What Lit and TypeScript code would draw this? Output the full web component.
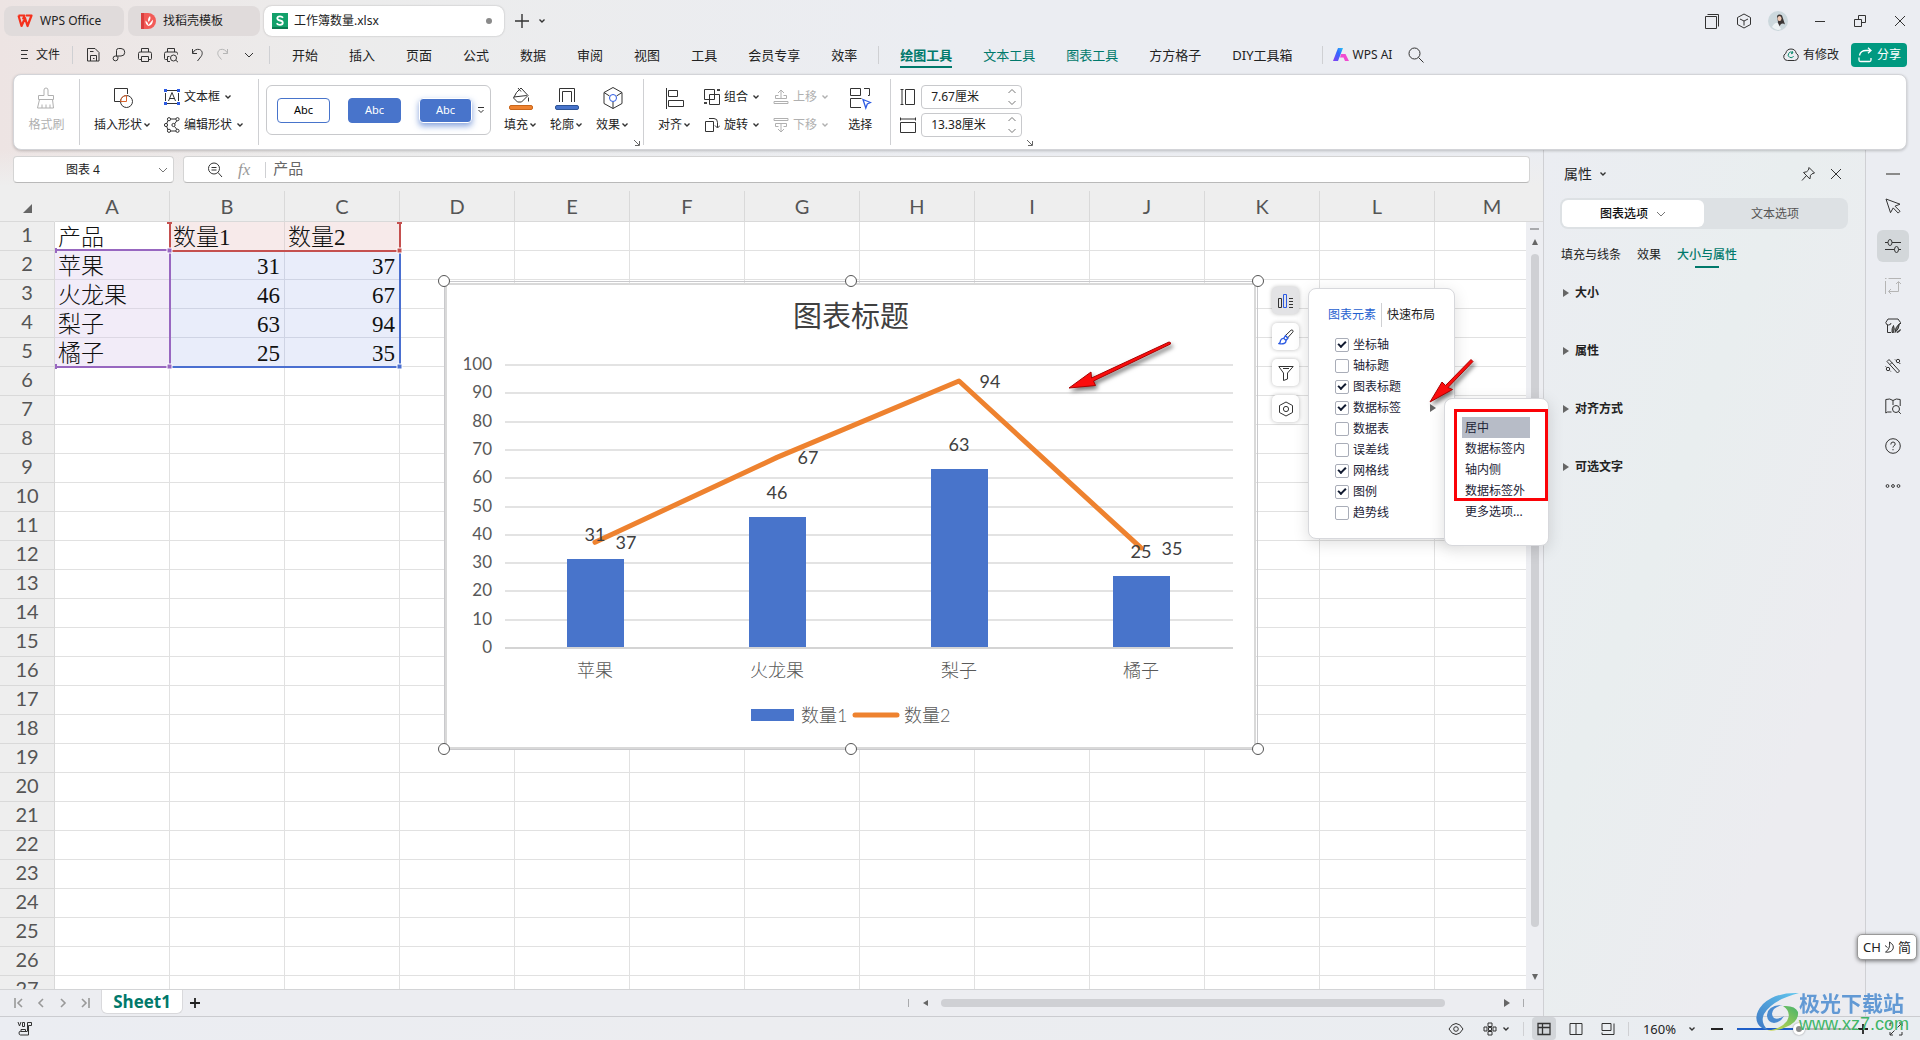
import { LitElement, html, svg, css, TemplateResult, SVGTemplateResult } from "lit";
import { customElement } from "lit/decorators.js";
import { classMap } from "lit/directives/class-map.js";

const ico = (w: number, h: number, body: SVGTemplateResult): TemplateResult =>
  html`<svg class="ico" width=${w} height=${h} viewBox="0 0 ${w} ${h}" aria-hidden="true">${body}</svg>`;

const chev = () => ico(8, 8, svg`<path d="M1.5 2.5 4 5l2.5-2.5" stroke-width="1.4"/>`);
const chevThin = () => ico(10, 8, svg`<path d="M1 2l4 4 4-4"/>`);

const I: Record<string, () => TemplateResult> = {
  menu: () => ico(9, 16, svg`<path d="M1 3.5h7M1 7.5h6M1 11.5h7"/>`),
  save: () => ico(16, 16, svg`<path d="M2.5 1.5h7.5l4 4v8.5h-11.5zM5.5 14v-5.5h6v5.5M5 4.5h3.5M8 11.5h1.5"/>`),
  link: () => ico(16, 16, svg`<path d="M5.5 9.5V3.5q0-2 2-2h2.5a3.3 3.3 0 0 1 0 7.5H4.5a2.4 2.4 0 1 0 2.4 2.4V9.2"/>`),
  print: () => ico(16, 16, svg`<path d="M4.5 5V1.5h7V5M4 12.5H2.5a1 1 0 0 1-1-1v-5a1.5 1.5 0 0 1 1.5-1.5h10a1.5 1.5 0 0 1 1.5 1.5v5a1 1 0 0 1-1 1H12M4.5 9.5h7v5h-7z"/>`),
  preview: () => ico(16, 16, svg`<path d="M4.5 5V1.5h7V5M4 12.5H2.5a1 1 0 0 1-1-1v-5a1.5 1.5 0 0 1 1.5-1.5h10a1.5 1.5 0 0 1 1.5 1.5v1M4.5 14.5v-5h2M4.5 14.5H7"/><circle cx="10.5" cy="11" r="3"/><path d="M12.8 13.2l2.2 2"/>`),
  undo: () => ico(16, 16, svg`<path d="M3.5 2v4.5H8M3.5 6.2C5 3 8 1.8 10.5 2.5c3.3 1.1 3.3 4.8 1.5 7L8.5 14"/>`),
  redo: () => ico(16, 16, svg`<path d="M12.5 2v4.5H8M12.5 6.2C11 3 8 1.8 5.5 2.5c-3.3 1.1-3.3 4.8-1.5 7L6.5 12.5"/>`),
  brush: () => ico(24, 24, svg`<path d="M10 9.5V4a2 2 0 0 1 4 0v5.5h5.5v4h-15v-4zM5.5 13.5l-2 8.5h16l-1-8.5M8 22v-3.5M12 22v-3.5M16 22v-3.5"/>`),
  shapes: () => ico(24, 24, svg`<path d="M12 15.5H3.5v-13h13V8"/><circle cx="15.5" cy="15.5" r="6"/><path d="M9.5 15.5a6 6 0 0 1 6-6v6z" stroke="#d9622b"/>`),
  textbox: () => ico(16, 16, svg`<path d="M3 1.5h10M3 14.5h10M1.5 4v8M14.5 4v8M4.5 12 8 3.5 11.5 12M5.8 9.5h4.5"/><path d="M0 0h3v3H0zM13 0h3v3h-3zM0 13h3v3H0zM13 13h3v3h-3z" fill="#2d5be3" stroke="none"/>`),
  editshape: () => ico(16, 16, svg`<path d="M4 3.5 2.5 7M2.5 9 4 13M6.5 2h5.5M13 3.5 10.5 7M10.5 9.5l2.5 3M6.5 14h5.5"/><circle cx="5" cy="2.2" r="1.6"/><circle cx="13.5" cy="2.2" r="1.6"/><circle cx="2" cy="8" r="1.6"/><circle cx="9.5" cy="8" r="1.6"/><circle cx="5" cy="13.8" r="1.6"/><circle cx="13.5" cy="13.8" r="1.6"/>`),
  fill: () => ico(24, 24, svg`<path d="M7.5 6.5 12 2l7 7.5-6.5 6.5h-4L4.5 12zM9 2l3 3.5M4.8 11l13-1.5M19.5 11.5v4"/><rect x=".5" y="19.5" width="23" height="4" rx="1.5" fill="#ee822f" stroke="#c9661b"/>`),
  outline: () => ico(24, 24, svg`<path d="M4.5 16V2.5h15V16M7.5 16V5.5h9V16"/><rect x=".5" y="19.5" width="23" height="4" rx="1.5" fill="#4874cb" stroke="#2f5597"/>`),
  effect: () => ico(24, 24, svg`<path d="M12 1.5 21 6.5v11L12 22.5 3 17.5v-11zM3 6.5l5.5 3.5M21 6.5 15.5 10M12 22.5V16"/><circle cx="12" cy="12" r="3.5" stroke="#2d5be3"/>`),
  align: () => ico(24, 24, svg`<path d="M3.5 2v21M5.5 4.5h9v6h-9zM5.5 14.5h15v6h-15z"/>`),
  group: () => ico(16, 16, svg`<path d="M.5.5h10v10H.5zM5.5 5.5h10v10h-10z"/><path d="M13 0h3v2h-3zM0 13h3v2H0z" fill="#444" stroke="none"/>`),
  rotate: () => ico(16, 16, svg`<path d="M1.5 4.5h8v10h-8zM5 1.5h5q3.5 0 3.5 4v5M11 8.5l2.5 2.5L16 8.5"/>`),
  up: () => ico(16, 16, svg`<path d="M8 10V1M5 4l3-3 3 3M5.5 6.5h-3v3h11v-3h-3M1 12.5h14v2H1z"/>`),
  down: () => ico(16, 16, svg`<path d="M8 6v9M5 12l3 3 3-3M5.5 9.5h-3v-3h11v3h-3M1 1.5h14v2H1z"/>`),
  select: () => ico(24, 24, svg`<path d="M2.5 9.5v-7h10v7zM16 2.5h5.5v7H20M2.5 12.5v9H13M2.5 12.5h11"/><path d="M15 13.5l7.5 3-3.2 1.5-1.5 4z" stroke="#2d5be3" stroke-width="1.3"/>`),
  hgt: () => ico(16, 16, svg`<path d="M5.5.5h9v15h-9zM.5.5h3M2 .5v15M.5 15.5h3"/>`),
  wid: () => ico(16, 16, svg`<path d="M.5 5.5h15v10H.5zM.5.5v3M.5 2h15M15.5.5v3"/>`),
  corner: () => ico(8, 8, svg`<path d="M1 1l5 5M6.5 2v4.5H2" stroke="#666"/>`),
  zoomfx: () => ico(16, 16, svg`<circle cx="7" cy="6.5" r="5.5"/><path d="M11 10.5l4 4.5M4.5 5.5h5M4.5 8h5"/>`),
  search: () => ico(16, 16, svg`<circle cx="6.5" cy="6.5" r="5.5"/><path d="M10.5 10.5l5 5"/>`),
  windows: () => ico(16, 16, svg`<path d="M1.5 3.5h11v12h-11zM3.5 1.5h11v12"/>`),
  cube: () => ico(16, 16, svg`<path d="M8 1l6.5 3.5v7L8 15 1.5 11.5v-7zM4 6 8 8l4-2M8 8v4.5"/>`),
  min: () => ico(16, 16, svg`<path d="M3 8.5h10"/>`),
  restore: () => ico(16, 16, svg`<path d="M2.5 6.5h7v7h-7zM6.5 6V2.5h7v7H10"/>`),
  close: () => ico(16, 16, svg`<path d="M3 3l10 10M13 3 3 13"/>`),
  cloud: () => ico(16, 16, svg`<path d="M4.5 13.5a3.8 3.8 0 0 1-1.7-7.2 5.3 5.3 0 0 1 10.4 0 3.8 3.8 0 0 1-1.7 7.2z"/><path d="M9.5 5.5A2.8 2.8 0 1 0 10.6 9M9 4l1 2-2 .8" stroke="#0a8a6d"/>`),
  share: () => ico(16, 16, svg`<path d="M2 10.5v2.5q0 1.5 1.5 1.5h9q1.5 0 1.5-1.5v-2M2.5 8.5Q3.5 3.5 9 3.5h5M11 .8l3 2.7-3 2.7" stroke="#fff" stroke-width="1.3"/>`),
  pin: () => ico(16, 16, svg`<path d="M9 1.5l5.5 5.5-2.5.8-1.5 1.5-.6 3.7L3.5 6.5l3.2-.8L8.5 4zM6.5 9.5 2 14.5"/>`),
  x: () => ico(12, 12, svg`<path d="M1 1l10 10M11 1 1 11"/>`),
  cursor: () => ico(16, 16, svg`<path d="M1 1l14 5.2-5 2 5 5-1.8 1.9-5-5.2-2.7 4.8z"/>`),
  sliders: () => ico(16, 16, svg`<path d="M0 4.5h3M7 4.5h9M0 11.5h9.5M13.5 11.5H16"/><ellipse cx="5" cy="4.5" rx="2" ry="3"/><ellipse cx="11.5" cy="11.5" rx="2" ry="3"/>`),
  swap: () => ico(16, 16, svg`<path d="M0 .5h1.5M3.5.5H16M.5 3V16M13.5 4v9.5H4M11 6l2.5-2.5L16 6M6 11l-2.5 2.5L6 16"/>`),
  style: () => ico(16, 16, svg`<path d="M3 1h10l2.5 3.5v1.5M3 1 .8 4.5q.2 2.5 2.7 2.5T6 5M2.5 7v7.5H6"/><path d="M7 14.5q-.5-4 1.5-7 1.5 3.5 0 7zM10 14.5q0-5 4.5-9-.5 6-4.5 9zM12 14.5q2-2.5 3.5-2.8-.8 2.3-3.5 2.8z" fill="#777"/>`),
  magic: () => ico(16, 16, svg`<path d="M2 3.5 4 1.5 14.5 13l-2 2zM5 6.5l2-2"/><circle cx="13" cy="3" r="1.7"/><circle cx="3" cy="11" r="1.7"/><path d="M10 1.5l1 1M15.2 6l-.7-1M.5 8.5l1 .8M5.8 13.5l-1-1"/>`),
  book: () => ico(16, 16, svg`<path d="M6.5 14H2.5L.8 15V1.5Q5 0 8 2.5q3-2.5 7.2-1V8M8 2.5V7"/><circle cx="11" cy="11" r="3.5"/><path d="M13.5 13.5l2.3 2.3"/>`),
  help: () => ico(16, 16, svg`<circle cx="8" cy="8" r="7.3"/><path d="M5.8 6.5q0-2.5 2.2-2.5t2.2 2q0 1.2-1.2 1.8-1 .6-1 1.7M8 11v1.3"/>`),
  dots: () => ico(16, 6, svg`<circle cx="2.5" cy="3" r="1.4"/><circle cx="8" cy="3" r="1.4"/><circle cx="13.5" cy="3" r="1.4"/>`),
  dash: () => ico(16, 4, svg`<path d="M1 2h14" stroke="#8a8a8a" stroke-width="2"/>`),
  elements: () => ico(16, 16, svg`<path d="M.5 5.5h3v9h-3z"/><path d="M5.5 1.5h3v13h-3z" stroke="#2d5be3"/><path d="M11 5.5h4M11 8.5h4M11 11.5h4M11 14.5h4"/>`),
  paint: () => ico(16, 16, svg`<path d="M7.5 6.5 13 1.2q1-.6 1.8.2.7.8 0 1.7L9.5 9z"/><path d="M1 14.5q1.5-1 1.5-3 1-2.5 3.5-2l2 2q.2 2.5-2 3-2.5.7-5 0zM6 9l1.5-2.5L10 9l-2 2.5" stroke="#2d5be3" stroke-width="1.3"/>`),
  funnel: () => ico(16, 16, svg`<path d="M.8 1.5h14.4L9.5 8v6l-4 1.5V8zM5 3.5h6"/>`),
  hex: () => ico(16, 16, svg`<path d="M8 1l6.5 3.5v7L8 15 1.5 11.5v-7z"/><circle cx="8" cy="8" r="2.6"/>`),
  first: () => ico(12, 12, svg`<path d="M2 1v10M9 2 5 6l4 4" stroke-width="1.6"/>`),
  prev: () => ico(12, 12, svg`<path d="M8 2 4 6l4 4" stroke-width="1.6"/>`),
  next: () => ico(12, 12, svg`<path d="M4 2l4 4-4 4" stroke-width="1.6"/>`),
  last: () => ico(12, 12, svg`<path d="M10 1v10M3 2l4 4-4 4" stroke-width="1.6"/>`),
  plus: () => ico(12, 12, svg`<path d="M6 1v10M1 6h10" stroke="#222" stroke-width="1.8"/>`),
  minus: () => ico(12, 12, svg`<path d="M0 6h12" stroke="#222" stroke-width="2"/>`),
  macro: () => ico(16, 16, svg`<path d="M1 1l1.5 4L4 1M5.5 1.5h2v4h-2zM10.5 10V1.5h4v3h-3v9.5h-8q-1.500 0-1.500-2t1.500-1.500h7M4 10.500V8.500h4.500v2"/>`),
  eye: () => ico(16, 16, svg`<path d="M1 8q3-5.5 7-5.5T15 8q-3 5.5-7 5.5T1 8z"/><circle cx="8" cy="8" r="2.3"/>`),
  cross: () => ico(14, 14, svg`<path d="M5 1h4v3.5H5zM5 9.5h4V13H5zM1 5h3v4H1zM10 5h3v4h-3zM5.5 5.5h3v3h-3z"/>`),
  normal: () => ico(14, 14, svg`<path d="M1 1.5h12v11H1zM1 5.5h12M5.5 1.5v11" stroke-width="1.3"/>`),
  page: () => ico(14, 14, svg`<path d="M1 1.5h12v11H1zM7 1.5v11"/>`),
  breakp: () => ico(14, 14, svg`<path d="M1 1.5h9v7H1zM1 12.5h12v-11M1 10.5v2"/>`),
  expand: () => ico(14, 14, svg`<path d="M1 4V1h3M10 1h3v3M13 10v3h-3M4 13H1v-3M8.5 5.5 13 1M5.5 8.5 1 13"/>`),
};

const MENU_MAIN = ["开始", "插入", "页面", "公式", "数据", "审阅", "视图", "工具", "会员专享", "效率"];
const MENU_CONTEXT: [string, string][] = [
  ["绘图工具", "active"], ["文本工具", "tool"], ["图表工具", "tool"], ["方方格子", ""], ["DIY工具箱", ""],
];
const COLUMNS = "ABCDEFGHIJKLM".split("");
const DATA = [
  ["产品", "数量1", "数量2"],
  ["苹果", "31", "37"],
  ["火龙果", "46", "67"],
  ["梨子", "63", "94"],
  ["橘子", "25", "35"],
];

@customElement("wps-chart")
class WpsChart extends LitElement {
  static styles = css`
    :host { display: block; }
    svg { display: block; overflow: visible; }
    .frame { fill: #fff; stroke: #d9d9d9; stroke-width: 2; }
    .sel { fill: none; stroke: #c9c9cc; stroke-width: 1; }
    .title { font: 29px/1 "Noto Sans CJK SC", sans-serif; fill: #404040; text-anchor: middle; }
    .axis { font: 17px/1 Lato, "Noto Sans", sans-serif; fill: #595959; text-anchor: end; }
    .cat { font: 300 18px/1 Lato, "Noto Sans CJK SC", sans-serif; fill: #595959; text-anchor: middle; }
    .leg { font: 300 18px/1 Lato, "Noto Sans CJK SC", sans-serif; fill: #595959; }
    .lab { font: 18px/1 Lato, "Noto Sans", sans-serif; fill: #404040; text-anchor: middle; }
    .grid { stroke: #e3e3e3; stroke-width: 2; }
    .base { stroke: #d4d4d4; stroke-width: 2; }
    .bar { fill: #4874cb; }
    .line { fill: none; stroke: #ee822f; stroke-width: 5; stroke-linecap: round; stroke-linejoin: round; }
    .handle { fill: #fff; stroke: #555; stroke-width: 1; }
  `;
  render() {
    const y = (v: number) => 366 - v * 2.83;
    const xs = [151, 333, 515, 697];
    const s1 = [31, 46, 63, 25];
    const s2 = [37, 67, 94, 35];
    const cats = DATA.slice(1).map((r) => r[0]);
    return html`<svg width="814" height="469" viewBox="0 0 814 469" role="img" aria-label="图表标题">
      <rect class="sel" x=".5" y=".5" width="813" height="468" />
      <rect class="frame" x="2" y="3" width="809" height="464" />
      <text class="title" x="407" y="46">图表标题</text>
      ${Array.from({ length: 11 }, (_, i) => svg`
        <line class=${i ? "grid" : "base"} x1="61" x2="789" y1=${Math.round(y(i * 10)) + 1} y2=${Math.round(y(i * 10)) + 1}></line>
        <text class="axis" x="48" y=${Math.round(y(i * 10)) + 6}>${i * 10}</text>`)}
      ${s1.map((v, i) => svg`<rect class="bar" x=${xs[i] - 28} width="57" y=${Math.round(y(v))} height=${366 - Math.round(y(v))}></rect>
        <text class="cat" x=${xs[i]} y="396">${cats[i]}</text>`)}
      <polyline class="line" points=${s2.map((v, i) => `${xs[i]},${y(v)}`).join(" ")} />
      ${s1.map((v, i) => svg`<text class="lab" x=${xs[i]} y=${Math.round(y(v)) - 18}>${v}</text>`)}
      ${s2.map((v, i) => svg`<text class="lab" x=${xs[i] + 31} y=${Math.round(y(v)) + 7}>${v}</text>`)}
      <rect class="bar" x="307" y="428" width="43" height="12" />
      <text class="leg" x="357" y="441">数量1</text>
      <line class="line" x1="411" x2="453" y1="434" y2="434" />
      <text class="leg" x="460" y="441">数量2</text>
      ${[[0, 0], [407, 0], [814, 0], [0, 468], [407, 468], [814, 468]].map(([cx, cy]) => svg`<circle class="handle" cx=${cx} cy=${cy} r="5.5"></circle>`)}
    </svg>`;
  }
}

@customElement("app-root")
class AppRoot extends LitElement {
  static styles = css`
    :host {
      display: flex; flex-direction: column; height: 100vh; overflow: hidden; position: relative;
      font: 12px/16px "Noto Sans", "Noto Sans CJK SC", sans-serif; color: #222;
      background: linear-gradient(90deg, #ede4e3 0, #ececec 18%, #ebedf2 50%, #ebedf2 100%);
    }
    * { box-sizing: border-box; }
    button, input { font: inherit; color: inherit; border: 0; padding: 0; margin: 0; background: none; }
    button { display: inline-flex; align-items: center; justify-content: center; white-space: nowrap; }
    .ico { display: block; flex: none; fill: none; stroke: #333; stroke-width: 1; }
    .vr { width: 1px; background: #cfd0d3; align-self: stretch; flex: none; }
    .grow { flex: 1; }

    .title { display: flex; align-items: center; height: 40px; padding: 2px 12px 0 4px; gap: 4px; flex: none; }
    .tab { height: 30px; border-radius: 8px; background: #e0dbdb; padding: 0 13px; gap: 7px; justify-content: flex-start; }
    .tab.home { width: 120px; }
    .tab.docer { width: 132px; }
    .tab.book { width: 240px; background: #fff; padding: 0 12px 0 8px; gap: 6px; box-shadow: 0 0 2px #0004; }
    .mark { width: 6px; height: 6px; border-radius: 50%; background: #8a8a8a; }
    .newtab { gap: 8px; margin-left: 6px; }
    .winbtns { display: flex; align-items: center; gap: 24px; }
    .winbtns .near { display: flex; align-items: center; gap: 16px; }

    .menu { display: flex; align-items: center; height: 30px; padding: 0 13px 0 20px; flex: none; }
    .file { gap: 7px; margin-right: 12px; }
    .menu .vr { height: 18px; align-self: center; }
    .quick { display: flex; gap: 10px; margin: 0 12px; align-items: center; }
    .quick button { width: 16px; height: 16px; }
    .dim .ico { stroke: #b5b5b5; }
    .nav { display: flex; gap: 31px; margin: 0 21px 0 22px; font-size: 13px; line-height: 20px; }
    .nav button { height: 26px; border-bottom: 2px solid transparent; border-top: 2px solid transparent; }
    .nav .tool { color: #00796b; }
    .nav .active { color: #00796b; font-weight: 700; border-bottom-color: #00796b; }
    .nav.ctx { margin: 0 29px 0 21px; }
    .ai { gap: 4px; margin: 0 16px 0 10px; }
    .cloud { gap: 4px; margin-right: 12px; }
    .share { gap: 4px; width: 56px; height: 24px; border-radius: 4px; background: #009980; color: #fff; }

    .ribbon { display: flex; flex: none; margin: 4px 13px 0; height: 76px; background: #fff; border: 1px solid #d3d4d8; border-radius: 8px; box-shadow: 0 1px 3px #0003; position: relative; z-index: 1; }
    .ribbon .vr { margin: 4px 0; }
    .grp { display: flex; align-items: flex-start; gap: 13px; padding: 0 14px; position: relative; }
    .grp.first { width: 65px; justify-content: center; padding: 0; }
    .grp.arrange { padding-right: 18px; }
    .big { flex-direction: column; gap: 7px; padding-top: 11px; }
    .arrange .big:last-child { margin-left: 6px; }
    .lbl { display: flex; align-items: center; gap: 1px; }
    .off { color: #b0b0b0; }
    .off .ico { stroke: #b0b0b0; }
    .stack { display: flex; flex-direction: column; gap: 12px; padding-top: 14px; align-items: flex-start; }
    .stack button { gap: 4px; height: 16px; }
    .gallery { display: flex; align-items: center; width: 225px; height: 50px; margin: 10px 0 0 -7px; padding: 0 0 0 10px; border: 1px solid #c8c9cc; border-radius: 6px; gap: 18px; }
    .abc { width: 53px; height: 25px; border-radius: 4px; border: 1px solid #4874cb; font-size: 11px; background: #fff; color: #000; }
    .abc.solid { background: #4874cb; color: #fff; }
    .abc.glow { box-shadow: 0 3px 6px #4874cbaa; border-color: #fff; }
    .more { margin-left: -13px; }
    .launch { position: absolute; right: 2px; bottom: 2px; }
    .dims { display: flex; flex-direction: column; gap: 4px; padding-top: 10px; margin-left: -5px; }
    .dim-row { display: flex; align-items: center; gap: 5px; }
    .spin { display: flex; align-items: center; width: 101px; height: 24px; border: 1px solid #c8c9cc; border-radius: 4px; padding: 0 4px 0 9px; background: #fff; }
    .spin input { width: 70px; flex: 1; outline: 0; }
    .spin .ico { stroke: #777; }

    .body { display: flex; flex: 1; min-height: 0; }
    .work { display: flex; flex-direction: column; flex: 1; min-width: 0; background: linear-gradient(#eee0, #eee 36px); border-right: 1px solid #cfd0d4; }
    .fbar { display: flex; gap: 9px; padding: 6px 13px 8px; flex: none; }
    .box { display: flex; align-items: center; height: 27px; background: #fff; border: 1px solid #d4d4d4; border-bottom-color: #b9b9b9; border-radius: 4px; }
    .name { width: 161px; padding-right: 5px; }
    .name input { flex: 1; min-width: 0; text-align: center; padding-right: 6px; }
    .name .ico { stroke: #777; }
    .formula { flex: 1; padding-left: 23px; gap: 15px; }
    .formula .fx { font: italic 17px/18px "Liberation Serif", serif; color: #999; }
    .formula .vr { height: 16px; align-self: center; margin-right: -8px; }
    .formula input { flex: 1; font-size: 15px; line-height: 20px; padding-bottom: 3px; color: #666; }

    .sheet { flex: 1; min-height: 0; position: relative; overflow: hidden; border-bottom: 1px solid #d3d4d6; }
    table { border-spacing: 0; table-layout: fixed; width: 1550px; }
    th, td { padding: 0; overflow: hidden; white-space: nowrap; }
    th { font: 20px/24px Lato, "Noto Sans", sans-serif; color: #555; background: #eee; border-right: 1px solid #d9d9d9; border-bottom: 1px solid #d9d9d9; text-align: center; }
    thead th { height: 31px; padding-bottom: 1px; }
    tbody th { height: 29px; padding-bottom: 4px; }
    .c0 { width: 55px; }
    .corner { border-right-color: transparent; }
    .corner svg { margin: 0 0 0 2px; fill: #666; }
    td { height: 29px; padding: 4px 4px 0 3px; line-height: 24px; background: #fff; border-right: 1px solid #e1e1e1; border-bottom: 1px solid #e1e1e1; font-family: "Liberation Serif", "Noto Sans CJK SC", serif; font-size: 23px; font-weight: 300; color: #111; }
    td.num { text-align: right; }
    td.head { background: #f7eaea; border-color: #e0d6d6; }
    td.key { background: #f2ecf8; border-color: #ddd8e4; }
    td.val { background: #e9edfa; border-color: #cfd4e4; }
    .ranges { position: absolute; left: 55px; top: 30px; }
    .chart { position: absolute; left: 444px; top: 90px; }
    .vscroll { position: absolute; right: 0; top: 31px; bottom: 0; width: 17px; background: #edeef2; display: flex; flex-direction: column; align-items: center; padding: 6px 0 8px; gap: 8px; }
    .vthumb { width: 8px; flex: 1; margin: 0 0 38px; border-radius: 4px; background: #cfd0d4; }
    .tick { background: #a9aaad; }
    .tick.h { width: 9px; height: 2px; }
    .tri { fill: #666; display: block; }

    .side { position: absolute; left: 1272px; top: 96px; display: flex; flex-direction: column; gap: 9px; }
    .side button { width: 27px; height: 27px; background: #fff; border-radius: 5px; box-shadow: 0 0 4px #0004; }
    .side button.on { background: #e3e3e5; }
    .pop { position: absolute; left: 1308px; top: 97px; width: 147px; height: 251px; background: #fff; border: 1px solid #d7d8dc; border-radius: 8px; box-shadow: 0 4px 16px #0002; padding: 14px 0 0 19px; }
    .ptabs { display: flex; align-items: center; gap: 5px; height: 24px; margin-bottom: 7px; }
    .ptabs .on { color: #1f5fd0; }
    .pop label { display: flex; align-items: center; gap: 4px; height: 21px; padding-left: 7px; color: #1c2336; }
    .pop input { appearance: none; width: 14px; height: 14px; border: 1px solid #a9adb8; border-radius: 2px; background: #fff; position: relative; }
    .pop input:checked::after { content: ""; position: absolute; left: 2px; top: 2px; width: 6px; height: 3px; border: solid #111a30; border-width: 0 0 2px 2px; transform: rotate(-45deg); }
    .sub-arrow { margin-left: 24px; }

    .float { position: absolute; left: 0; top: 191px; z-index: 3; }
    .sub { position: absolute; left: 1444px; top: 207px; width: 105px; height: 148px; background: #fff; border: 1px solid #d7d8dc; border-radius: 8px; box-shadow: 0 4px 16px #0002; padding: 18px 18px 0 17px; display: flex; flex-direction: column; }
    .sub button { height: 21px; flex: none; justify-content: flex-start; padding-left: 3px; color: #1c2336; }
    .sub .on { background: #b7bcc7; }
    .redbox { position: absolute; left: 1454px; top: 218px; width: 94px; height: 92px; border: 3px solid #fb0207; pointer-events: none; }
    .arrow { position: absolute; filter: drop-shadow(2px 3px 2px #0008); fill: #fb0d0d; stroke: #a00; stroke-width: 1; }
    .arrow.a { left: 1060px; top: 142px; }
    .arrow.b { left: 1420px; top: 160px; }

    .tabs { display: flex; align-items: center; height: 26px; flex: none; background: #ecedf1; padding-left: 13px; }
    .tabs .nav4 { display: flex; gap: 10px; }
    .tabs .nav4 .ico { stroke: #999; }
    .sheet-tab { align-self: flex-start; width: 82px; height: 24px; margin: 0 6px 0 10px; background: #fff; border: 1px solid #d9d9dc; border-top: 0; border-radius: 0 0 6px 6px; font: 700 17px/22px "Open Sans", "Noto Sans", sans-serif; color: #00796b; }
    .hscroll { display: flex; align-items: center; width: 616px; gap: 12px; margin-right: 19px; }
    .hscroll .hthumb { flex: 1; height: 8px; border-radius: 4px; background: #cfd0d4; margin-right: 46px; }
    .tick.v { width: 1px; height: 8px; }

    .panel { width: 321px; flex: none; padding: 14px 17px 14px 16px; background: linear-gradient(110deg, #ebedf2 0, #e9eeef 40%, #ececf0 75%); }
    .phead { display: flex; align-items: center; font-size: 14px; line-height: 20px; padding: 0 6px 0 4px; margin-bottom: 14px; }
    .phead button { margin-left: 14px; }
    .seg { display: flex; height: 31px; padding: 2px; background: #dde1e4; border-radius: 8px; margin-bottom: 18px; }
    .seg button { flex: 1; color: #555; }
    .seg .on { background: #fff; border-radius: 6px; color: #111; gap: 8px; font-weight: 500; }
    .seg .ico { stroke: #777; }
    .pt { display: flex; gap: 16px; margin-bottom: 17px; padding-left: 1px; }
    .pt button { flex-direction: column; height: 21px; justify-content: flex-start; }
    .pt .on { color: #00796b; font-weight: 500; gap: 3px; }
    .pt .on::after { content: ""; width: 24px; height: 2px; background: #00796b; }
    .sec { display: flex; align-items: center; justify-content: flex-start; gap: 5px; height: 16px; margin: 0 0 42px 2px; font-weight: 700; }
    .rail { width: 55px; flex: none; border-left: 1px solid #cfd0d4; display: flex; flex-direction: column; align-items: center; gap: 8px; padding-top: 16px; }
    .rail button { width: 32px; height: 32px; border-radius: 6px; }
    .rail button.slim { height: 16px; }
    .rail button.on { background: #d3d7da; }

    .status { display: flex; align-items: center; height: 24px; flex: none; border-top: 1px solid #cbccd0; padding: 0 17px; background: linear-gradient(90deg, #ebedf2, #ecedf0 40%, #e9edf1); }
    .status .vr { height: 14px; align-self: center; }
    .status .view { width: 24px; height: 23px; border-radius: 4px; }
    .status .view.on { background: #d2d5d9; }
    .views { display: flex; gap: 8px; margin: 0 8px; }
    .eye { margin-right: 19px; }
    .crossb { gap: 5px; margin-right: 13px; }
    .zoom { gap: 12px; margin: 0 15px 0 14px; font-size: 13px; }
    .range { appearance: none; width: 120px; height: 12px; margin: 0 0 0 14px; }
    .range::-webkit-slider-runnable-track { height: 2px; background: linear-gradient(90deg, #1f5fc8 52%, #bbb 52%); }
    .range::-webkit-slider-thumb { appearance: none; width: 12px; height: 12px; margin-top: -5px; border-radius: 50%; background: #8a8a8a; border: 3px solid #fff; box-shadow: 0 0 2px #0006; }
    .zplus { margin-right: 20px; }

    .ime { position: absolute; right: 3px; bottom: 80px; display: flex; align-items: center; gap: 3px; width: 60px; height: 26px; justify-content: center; background: #fff; border: 1px solid #999; border-radius: 5px; box-shadow: 0 1px 4px #0008; white-space: nowrap; z-index: 5; font-size: 13px; }
    .brand { position: absolute; right: 11px; bottom: 6px; display: flex; align-items: center; z-index: 6; pointer-events: none; }
    .brand .words { display: flex; flex-direction: column; margin-left: -2px; }
    .brand .cn { font: 700 21px/24px "Noto Sans CJK SC", sans-serif; color: #5b95d3; opacity: .95; }
    .brand .url { font: 18px/20px "Liberation Sans", sans-serif; color: #3fb567; }
  `;

  big(icon: string, label: string, drop = true, off = false) {
    return html`<button class=${classMap({ big: true, off })}>${I[icon]()}<span class="lbl">${label}${drop ? chev() : ""}</span></button>`;
  }
  small(icon: string, label: string, off = false) {
    return html`<button class=${classMap({ off })}>${I[icon]()}${label}${chev()}</button>`;
  }
  tri(dir: string) {
    const d: Record<string, string> = { up: "M1 7 4 1l3 6z", down: "M1 1h6L4 7z", left: "M7 1v6L2 4z", right: "M1 0v8l6-4z" };
    return html`<svg class="tri" width="8" height="8" viewBox="0 0 8 8" aria-hidden="true"><path d=${d[dir]}></path></svg>`;
  }
  size(icon: string, label: string, value: string) {
    return html`<label class="dim-row">${I[icon]()}<span class="spin"><input aria-label=${label} .value=${value} />
      ${ico(10, 18, svg`<path d="M1.5 5 5 1.5 8.5 5M1.5 13 5 16.5 8.5 13"/>`)}</span></label>`;
  }
  cell(r: number, c: number) {
    const v = DATA[r]?.[c] ?? "";
    const used = r < 5 && c < 3;
    return html`<td class=${classMap({
      head: used && r === 0 && c > 0, key: used && r > 0 && c === 0,
      val: used && r > 0 && c > 0, num: used && r > 0 && c > 0,
    })}>${v}</td>`;
  }

  render() {
    const opts: [string, boolean][] = [["坐标轴", true], ["轴标题", false], ["图表标题", true], ["数据标签", true], ["数据表", false], ["误差线", false], ["网格线", true], ["图例", true], ["趋势线", false]];
    return html`
      <header class="title">
        <button class="tab home">
          <svg width="16" height="14" viewBox="0 0 16 14" aria-hidden="true"><path d="M1.5 1.5h6L6 5.5M1.5 1.500 4.500 12 8 4l2.500 8L14.500 1.500H9" fill="none" stroke="#f5311d" stroke-width="2.2" stroke-linejoin="round"/></svg>WPS Office</button>
        <button class="tab docer">
          <svg width="15" height="16" viewBox="0 0 15 16" aria-hidden="true"><path d="M1 0h6a8 8 0 0 1 0 16H1z" fill="#f25b57"/><path d="M0 0h3v16H0z" fill="#d93f3f"/><path d="M7.5 13Q4 11 4.500 7.500 7 9 7.500 12 9 10 12 6.500 12 12 7.500 13zM7.500 9Q6 6 9 3q1.500 3-1.500 6z" fill="#fff"/></svg>找稻壳模板</button>
        <button class="tab book">
          <svg width="16" height="16" viewBox="0 0 16 16" aria-hidden="true"><path d="M0 0h16v16H0z" fill="#12a06a"/><path d="M0 14h16v2H0z" fill="#0b7a50"/><path d="M11 4.8Q10 3.300 8 3.300 5.300 3.300 5.300 5.300 5.300 7 8 7.500t2.800 2.300q0 2-2.800 2-2.300 0-3.300-1.600" fill="none" stroke="#fff" stroke-width="1.8"/></svg>工作簿数量.xlsx<span class="grow"></span><span class="mark"></span></button>
        <button class="newtab" aria-label="新建">${ico(16, 16, svg`<path d="M8 1v14M1 8h14" stroke-width="1.4"/>`)}${chev()}</button>
        <span class="grow"></span>
        <div class="winbtns">
          <div class="near"><button aria-label="窗口">${I.windows()}</button><button aria-label="应用">${I.cube()}</button>
            <svg width="20" height="20" viewBox="0 0 20 20" aria-hidden="true"><circle cx="10" cy="10" r="10" fill="#ccd8dd"/><path d="M9 5Q11 2.500 14 4.500l3 9Q15 12 13 13l-2 3Q9 14 10 11z" fill="#3a3535"/><ellipse cx="11.5" cy="7.500" rx="2" ry="2.500" fill="#efc9b4"/><path d="M4 16q3-5 6-4l3 6q-4 2.500-9-2z" fill="#edf3f5"/></svg></div>
          <button aria-label="最小化">${I.min()}</button><button aria-label="还原">${I.restore()}</button><button aria-label="关闭">${I.close()}</button>
        </div>
      </header>

      <div class="menu">
        <button class="file">${I.menu()}文件</button><span class="vr"></span>
        <div class="quick">
          ${["save", "link", "print", "preview", "undo"].map((k) => html`<button aria-label=${k}>${I[k]()}</button>`)}
          <button class="dim" aria-label="redo">${I.redo()}</button>
          <button aria-label="more">${chevThin()}</button>
        </div>
        <span class="vr"></span>
        <nav class="nav">${MENU_MAIN.map((m) => html`<button>${m}</button>`)}</nav>
        <span class="vr"></span>
        <nav class="nav ctx">${MENU_CONTEXT.map(([m, c]) => html`<button class=${c}>${m}</button>`)}</nav>
        <span class="vr"></span>
        <button class="ai"><svg width="16" height="14" viewBox="0 0 16 14" aria-hidden="true"><defs><linearGradient id="aia" x1="0" y1="1" x2="1" y2="0"><stop offset="0" stop-color="#8a3df0"/><stop offset=".6" stop-color="#2d6bff"/><stop offset="1" stop-color="#28c4f5"/></linearGradient></defs><path d="M0 13 5 0h5L5 13z" fill="url(#aia)"/><path d="M8 6h4.500l3.500 7h-4l-1.500-3.500H7z" fill="#f04bd0"/></svg>WPS AI</button>
        <button aria-label="搜索">${I.search()}</button>
        <span class="grow"></span>
        <button class="cloud">${I.cloud()}有修改</button>
        <button class="share">${I.share()}分享</button>
      </div>

      <section class="ribbon">
        <div class="grp first">${this.big("brush", "格式刷", false, true)}</div><span class="vr"></span>
        <div class="grp">${this.big("shapes", "插入形状")}
          <div class="stack">${this.small("textbox", "文本框")}${this.small("editshape", "编辑形状")}</div></div><span class="vr"></span>
        <div class="grp">
          <div class="gallery"><button class="abc">Abc</button><button class="abc solid">Abc</button><button class="abc solid glow">Abc</button>
            <button class="more" aria-label="更多样式">${ico(8, 8, svg`<path d="M1 1.5h6M1.5 4 4 6.5 6.5 4"/>`)}</button></div>
          ${this.big("fill", "填充")}${this.big("outline", "轮廓")}${this.big("effect", "效果")}
          <span class="launch">${I.corner()}</span></div><span class="vr"></span>
        <div class="grp arrange">${this.big("align", "对齐")}
          <div class="stack">${this.small("group", "组合")}${this.small("rotate", "旋转")}</div>
          <div class="stack">${this.small("up", "上移", true)}${this.small("down", "下移", true)}</div>
          ${this.big("select", "选择", false)}</div><span class="vr"></span>
        <div class="grp"><div class="dims">${this.size("hgt", "高度", "7.67厘米")}${this.size("wid", "宽度", "13.38厘米")}</div><span class="launch">${I.corner()}</span></div>
      </section>

      <main class="body">
        <section class="work">
          <div class="fbar">
            <div class="box name"><input aria-label="名称框" .value=${"图表 4"} /><button aria-label="展开">${chevThin()}</button></div>
            <div class="box formula"><button aria-label="查找">${I.zoomfx()}</button><span class="fx">fx</span><span class="vr"></span><input aria-label="编辑栏" .value=${"产品"} /></div>
          </div>
          <div class="sheet">
            <table>
              <thead><tr><th class="c0 corner"><svg width="10" height="10" viewBox="0 0 10 10" aria-hidden="true"><path d="M9 0v9H0z"/></svg></th>${COLUMNS.map((c) => html`<th scope="col">${c}</th>`)}</tr></thead>
              <tbody>${Array.from({ length: 27 }, (_, r) => html`<tr><th scope="row">${r + 1}</th>${COLUMNS.map((_c, c) => this.cell(r, c))}</tr>`)}</tbody>
            </table>
            <svg class="ranges" width="350" height="150" viewBox="0 0 350 150" aria-hidden="true">
              <g fill="none" stroke-width="2">
                <path d="M115 1v28M345 1v28M115 30h230M112 2h5M342 2h5" stroke="#c5504f"/>
                <path d="M345 30v116H115" stroke="#4a6fd0"/>
                <path d="M0 29h115v117H0M1 27v5M1 143v5" stroke="#9867c0"/>
              </g>
              <g stroke="#fff" stroke-width="1">
                <path d="M342 27h5v5h-5z" fill="#c5504f"/><path d="M342 143h5v5h-5z" fill="#4a6fd0"/>
                <path d="M112 27h5v5h-5zM112 143h5v5h-5z" fill="#9867c0"/>
              </g>
            </svg>
            <wps-chart class="chart"></wps-chart>
            <div class="vscroll"><span class="tick h"></span>${this.tri("up")}<span class="vthumb"></span>${this.tri("down")}</div>
            <div class="side"><button class="on" aria-label="图表元素">${I.elements()}</button><button aria-label="样式">${I.paint()}</button><button aria-label="筛选">${I.funnel()}</button><button aria-label="设置">${I.hex()}</button></div>
            <div class="pop">
              <div class="ptabs"><button class="on">图表元素</button><span class="vr"></span><button>快速布局</button></div>
              ${opts.map(([t, on]) => html`<label><input type="checkbox" .checked=${on} />${t}${t === "数据标签" ? html`<span class="sub-arrow">${this.tri("right")}</span>` : ""}</label>`)}
            </div>
          </div>
          <div class="tabs">
            <div class="nav4">${["first", "prev", "next", "last"].map((k) => html`<button aria-label=${k}>${I[k]()}</button>`)}</div>
            <button class="sheet-tab">Sheet1</button>
            <button aria-label="新建工作表">${I.plus()}</button>
            <span class="grow"></span>
            <div class="hscroll"><span class="tick v"></span>${this.tri("left")}<span class="hthumb"></span>${this.tri("right")}<span class="tick v"></span></div>
          </div>
        </section>

        <aside class="panel">
          <div class="phead">属性&nbsp;&nbsp;${chev()}<span class="grow"></span><button aria-label="固定">${I.pin()}</button><button aria-label="关闭">${I.x()}</button></div>
          <div class="seg"><button class="on">图表选项${chevThin()}</button><button>文本选项</button></div>
          <div class="pt"><button>填充与线条</button><button>效果</button><button class="on">大小与属性</button></div>
          ${["大小", "属性", "对齐方式", "可选文字"].map((s) => html`<button class="sec">${this.tri("right")}${s}</button>`)}
        </aside>
        <aside class="rail">
          <button class="slim" aria-label="收起">${I.dash()}</button>
          ${["cursor", "sliders", "swap", "style", "magic", "book", "help", "dots"].map((k) => html`<button class=${classMap({ on: k === "sliders", dim: k === "swap" })} aria-label=${k}>${I[k]()}</button>`)}
        </aside>
      </main>

      <footer class="status">
        <button aria-label="宏">${I.macro()}</button><span class="grow"></span>
        <button class="eye" aria-label="护眼">${I.eye()}</button>
        <button class="crossb" aria-label="阅读模式">${I.cross()}${chev()}</button><span class="vr"></span>
        <div class="views"><button class="view on" aria-label="普通">${I.normal()}</button><button class="view" aria-label="页面布局">${I.page()}</button><button class="view" aria-label="分页预览">${I.breakp()}</button></div><span class="vr"></span>
        <button class="zoom">160%${chev()}</button>
        <button aria-label="缩小">${I.minus()}</button>
        <input class="range" type="range" aria-label="缩放" min="0" max="100" .value=${"52"} />
        <button class="zplus" aria-label="放大">${I.plus()}</button>
        <button aria-label="全屏">${I.expand()}</button>
      </footer>

      <div class="ime">CH${ico(11, 14, svg`<path d="M5.5 2q5 3 3.500 7Q7 13 1.500 12 6.500 9 5.500 2zM1 5.500l2.500 2"/>`)}简</div>
      <div class="brand">
        <svg width="45" height="40" viewBox="0 0 45 40" aria-hidden="true"><defs><linearGradient id="sb" x1="0" y1="1" x2="1" y2="0"><stop offset="0" stop-color="#3f78c4"/><stop offset="1" stop-color="#62c8ef"/></linearGradient><linearGradient id="sg" x1="0" y1="1" x2="1" y2="0"><stop offset="0" stop-color="#d7dc4a"/><stop offset="1" stop-color="#46b36b"/></linearGradient></defs>
          <path d="M43 1Q20 0 7 12-3 23 2 32q3 5 10 6-8-7-4-16Q16 8 43 1z" fill="url(#sb)"/><path d="M27 13q-15 0-16 10 0 7 7 8 7-1 10-7-6 4-10 2-4-4 0-9 3-3 9-4z" fill="#4a8bd0"/><path d="M27 14q12-1 15 6 1 10-12 15-8 4-19 4 14-2 20-10 5-9-4-15z" fill="url(#sg)"/></svg>
        <div class="words"><span class="cn">极光下载站</span><span class="url">www.xz7.com</span></div>
      </div>
      <div class="float">
        <div class="sub"><button class="on">居中</button><button>数据标签内</button><button>轴内侧</button><button>数据标签外</button><button>更多选项...</button></div>
        <div class="redbox"></div>
        <svg class="arrow a" width="120" height="70" viewBox="0 0 120 70" aria-hidden="true"><path d="M9 55 31 39 31.5 45 109 9q2 0 1.5 2L33.5 48l2 4.5z"/></svg>
        <svg class="arrow b" width="60" height="60" viewBox="0 0 60 60" aria-hidden="true"><path d="M10 51 22 31l3.5 3.5L51 8.5l2 2L28 36.5l4.5 2z"/></svg>
      </div>
    `;
  }
}
